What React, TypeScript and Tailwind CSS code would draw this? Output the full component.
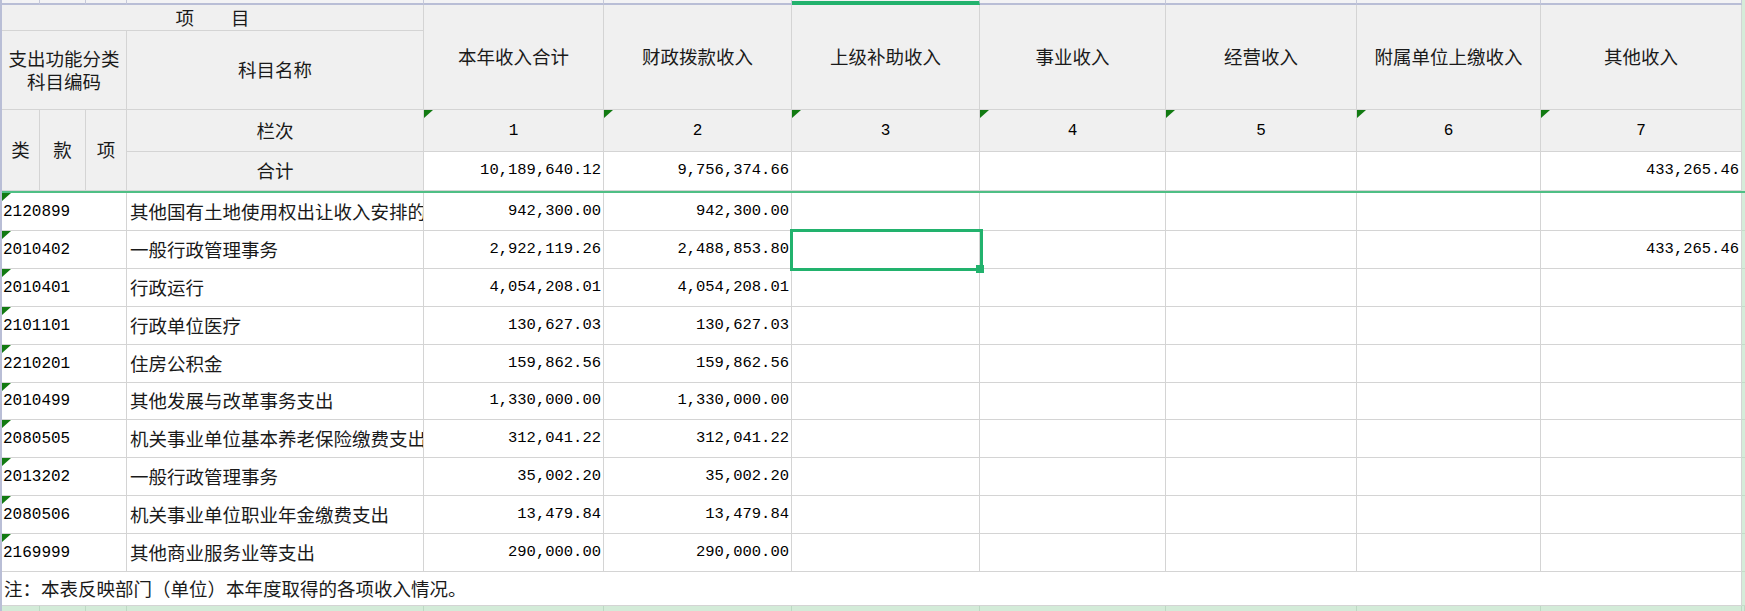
import React from "react";

const COLS =
  "grid grid-cols-[38px_46px_41px_297px_180px_188px_188px_186px_191px_184px_201px_3px]";
const CJK = "font-['Noto_Sans_CJK_SC','Noto_Sans',sans-serif] text-[18.5px] text-[#1a1a1a]";
const MONO = "font-['Liberation_Mono','Noto_Sans_CJK_SC',monospace] text-black";
const HB = "border-r border-b border-[#d4d4d4] bg-[#f0f0f0]";
const CB = "border-r border-b border-[#d4d4d4] bg-white";

function Tri() {
  return (
    <span className="absolute left-0 top-0 h-0 w-0 border-t-[8px] border-r-[9px] border-t-[#127a12] border-r-transparent" />
  );
}

const titles = ["本年收入合计", "财政拨款收入", "上级补助收入", "事业收入", "经营收入", "附属单位上缴收入", "其他收入"];
const totals = ["10,189,640.12", "9,756,374.66", "", "", "", "", "433,265.46"];

const rows: string[][] = [
  ["2120899", "其他国有土地使用权出让收入安排的支出", "942,300.00", "942,300.00", "", "", "", "", ""],
  ["2010402", "一般行政管理事务", "2,922,119.26", "2,488,853.80", "", "", "", "", "433,265.46"],
  ["2010401", "行政运行", "4,054,208.01", "4,054,208.01", "", "", "", "", ""],
  ["2101101", "行政单位医疗", "130,627.03", "130,627.03", "", "", "", "", ""],
  ["2210201", "住房公积金", "159,862.56", "159,862.56", "", "", "", "", ""],
  ["2010499", "其他发展与改革事务支出", "1,330,000.00", "1,330,000.00", "", "", "", "", ""],
  ["2080505", "机关事业单位基本养老保险缴费支出", "312,041.22", "312,041.22", "", "", "", "", ""],
  ["2013202", "一般行政管理事务", "35,002.20", "35,002.20", "", "", "", "", ""],
  ["2080506", "机关事业单位职业年金缴费支出", "13,479.84", "13,479.84", "", "", "", "", ""],
  ["2169999", "其他商业服务业等支出", "290,000.00", "290,000.00", "", "", "", "", ""],
];

const colStarts = [
  "col-start-5",
  "col-start-6",
  "col-start-7",
  "col-start-8",
  "col-start-9",
  "col-start-10",
  "col-start-11",
];

export default function App() {
  return (
    <div className="relative h-[611px] w-[1745px] overflow-hidden border-l-2 border-[#b9bed6] bg-white">
      {/* selected-row marker on left edge */}
      <div className="absolute -left-[2px] top-[193px] z-10 h-[76px] w-[2px] bg-[#8fd0a8]" />

      {/* top strip (scrolled-off row) */}
      <div className={`${COLS} h-[5px]`}>
        {Array.from({ length: 11 }).map((_, i) =>
          i === 6 ? (
            <div key={i} className="border-r border-b-4 border-r-[#c6c9da] border-b-[#22b26d] bg-[#f3f3f5]" />
          ) : (
            <div key={i} className="border-r border-b-2 border-r-[#c6c9da] border-b-[#b9bed6] bg-[#f3f3f5]" />
          )
        )}
        <div className="bg-[#d5ecd9]" />
      </div>

      {/* header block */}
      <div className={`${COLS} grid-rows-[26px_79px_42px_39px] border-b-2 border-[#4fbf85]`}>
        <div className={`${HB} ${CJK} col-span-4 col-start-1 row-start-1 flex items-center justify-center leading-none`}>
          项　　目
        </div>
        {titles.map((t, i) => (
          <div
            key={t}
            className={`${HB} ${CJK} ${colStarts[i]} row-span-2 row-start-1 flex items-center justify-center`}
          >
            {t}
          </div>
        ))}
        <div className="col-start-12 row-span-4 row-start-1 bg-[#d5ecd9]" />

        <div
          className={`${HB} ${CJK} col-span-3 col-start-1 row-start-2 flex flex-col items-center justify-center leading-[23px]`}
        >
          <span>支出功能分类</span>
          <span>科目编码</span>
        </div>
        <div className={`${HB} ${CJK} col-start-4 row-start-2 flex items-center justify-center`}>科目名称</div>

        <div className={`${HB} ${CJK} col-start-1 row-span-2 row-start-3 flex items-center justify-center`}>类</div>
        <div className={`${HB} ${CJK} col-start-2 row-span-2 row-start-3 flex items-center justify-center`}>款</div>
        <div className={`${HB} ${CJK} col-start-3 row-span-2 row-start-3 flex items-center justify-center`}>项</div>

        <div className={`${HB} ${CJK} col-start-4 row-start-3 flex items-center justify-center`}>栏次</div>
        {titles.map((_, i) => (
          <div
            key={`n${i}`}
            className={`${HB} ${MONO} ${colStarts[i]} relative row-start-3 flex items-center justify-center text-[16px]`}
          >
            <Tri />
            {i + 1}
          </div>
        ))}

        <div className={`${HB} ${CJK} col-start-4 row-start-4 flex items-center justify-center`}>合计</div>
        {totals.map((v, i) => (
          <div
            key={`t${i}`}
            className={`${CB} ${MONO} ${colStarts[i]} row-start-4 flex items-center justify-end pr-[2px] text-[15.5px]`}
          >
            {v}
          </div>
        ))}
      </div>

      {/* data rows */}
      {rows.map((r, ri) => (
        <div key={r[0] + ri} className={`${COLS} ${ri === 5 ? "h-[37px]" : "h-[38px]"}`}>
          <div className={`${CB} ${MONO} relative col-span-3 flex items-center pl-[1px] text-[16px]`}>
            <Tri />
            {r[0]}
          </div>
          <div className={`${CB} ${CJK} flex items-center overflow-hidden whitespace-nowrap pl-[3px]`}>{r[1]}</div>
          {r.slice(2).map((v, ci) => (
            <div
              key={ci}
              className={`${CB} ${MONO} relative flex items-center justify-end pr-[2px] text-[15.5px] ${
                ri === 1 && ci === 2 ? "z-10" : ""
              }`}
            >
              {v}
              {ri === 1 && ci === 2 && (
                <>
                  <span className="pointer-events-none absolute -left-[2px] -top-[2px] z-10 h-[42px] w-[193px] border-[3px] border-[#22b26d]" />
                  <span className="absolute left-[184px] top-[34px] z-20 h-[8px] w-[8px] bg-[#22b26d]" />
                </>
              )}
            </div>
          ))}
          <div className="border-b border-[#c3dcc8] bg-[#d5ecd9]" />
        </div>
      ))}

      {/* note row */}
      <div className={`${COLS} h-[34px]`}>
        <div className={`${CB} ${CJK} col-span-11 flex items-center pl-[2px]`}>
          注：本表反映部门（单位）本年度取得的各项收入情况。
        </div>
        <div className="border-b border-[#c3dcc8] bg-[#d5ecd9]" />
      </div>

      {/* bottom strip */}
      <div className={`${COLS} h-[5px]`}>
        {Array.from({ length: 12 }).map((_, i) => (
          <div key={i} className="border-r border-[#bcd9c3] bg-[#d3ebd8]" />
        ))}
      </div>
    </div>
  );
}
